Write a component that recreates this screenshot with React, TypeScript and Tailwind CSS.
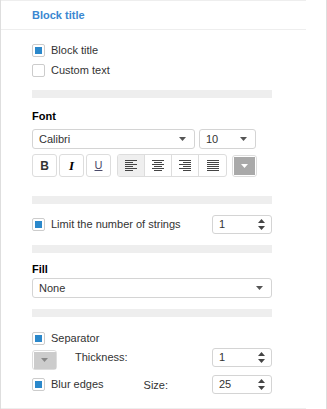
import React from 'react';

const font = { fontFamily: '"Liberation Sans", Arial, sans-serif' };

function Checkbox({ checked, label }: { checked: boolean; label: string }) {
    return (
        <div className="flex items-center h-[20px]">
            <div className="w-[13px] h-[13px] border border-[#cccccc] rounded-[2px] bg-white flex items-center justify-center">
                {checked && <div className="w-[7px] h-[7px] bg-[#2b88cb]" />}
            </div>
            <span className="ml-[6px] text-[11px] text-[#333333]">{label}</span>
        </div>
    );
}

function Caret({ color = '#555555' }: { color?: string }) {
    return (
        <svg width="7" height="4" viewBox="0 0 7 4">
            <path d="M0 0h7L3.5 4z" fill={color} />
        </svg>
    );
}

function Select({ value, className }: { value: string; className: string }) {
    return (
        <div className={`h-[20px] border border-[#d4d4d4] rounded-[3px] bg-white flex items-center justify-between pl-[6px] pr-[8px] ${className}`}>
            <span className="text-[11px] text-[#333333]">{value}</span>
            <Caret />
        </div>
    );
}

function NumberInput({ value }: { value: string }) {
    return (
        <div className="w-[60px] h-[19px] border border-[#d4d4d4] rounded-[3px] bg-white flex items-center justify-between pl-[6px] pr-[6px]">
            <span className="text-[11px] text-[#333333]">{value}</span>
            <svg width="7" height="11" viewBox="0 0 7 11">
                <path d="M0 4h7L3.5 0z" fill="#444444" />
                <path d="M0 7h7L3.5 11z" fill="#444444" />
            </svg>
        </div>
    );
}

function Bar() {
    return <div className="h-[8px] bg-[#eeeeee]" />;
}

function AlignIcon({ kind }: { kind: 'left' | 'center' | 'right' | 'justify' }) {
    const rows = [0, 1, 2, 3, 4, 5];
    return (
        <svg width="12" height="12" viewBox="0 0 12 12">
            {rows.map((i) => {
                const short = kind !== 'justify' && i % 2 === 1;
                const w = short ? 8 : 12;
                let x = 0;
                if (kind === 'center') x = (12 - w) / 2;
                if (kind === 'right') x = 12 - w;
                return <rect key={i} x={x} y={i * 2} width={w} height={1} fill="#444444" />;
            })}
        </svg>
    );
}

export default function App() {
    return (
        <div className="w-[327px] h-[409px] bg-white border-l border-r border-[#dedede] overflow-hidden" style={font}>
            <div className="w-[305px] h-[409px] border-t border-b border-[#eeeeee]">
                <div className="h-[29px] border-b border-[#eeeeee] flex items-center pl-[31px]">
                    <span className="text-[11px] font-bold text-[#3a87d1]">Block title</span>
                </div>
                <div className="pl-[31px] w-[271px]">
                    <div className="mt-[10px]">
                        <Checkbox checked label="Block title" />
                        <Checkbox checked={false} label="Custom text" />
                    </div>
                    <div className="mt-[10px]"><Bar /></div>

                    <div className="mt-[12px] text-[11px] font-bold text-black leading-[13px]">Font</div>
                    <div className="mt-[6px] flex gap-[4px]">
                        <Select value="Calibri" className="w-[163px]" />
                        <Select value="10" className="w-[57px]" />
                    </div>
                    <div className="mt-[5px] flex items-center">
                        <div className="flex gap-[2px]">
                            <div className="w-[25px] h-[23px] border border-[#dddddd] rounded-[3px] flex items-center justify-center text-[12px] font-bold text-[#333333]">B</div>
                            <div className="w-[25px] h-[23px] border border-[#dddddd] rounded-[3px] flex items-center justify-center text-[13px] font-bold italic text-black" style={{ fontFamily: '"Liberation Serif", serif' }}>I</div>
                            <div className="w-[25px] h-[23px] border border-[#dddddd] rounded-[3px] flex items-center justify-center text-[11px] underline text-[#4a4a6a]">U</div>
                        </div>
                        <div className="ml-[6px] flex border border-[#dddddd] rounded-[3px] h-[23px] overflow-hidden">
                            <div className="w-[27px] bg-[#efefef] border-r border-[#dddddd] flex items-center justify-center"><AlignIcon kind="left" /></div>
                            <div className="w-[27px] border-r border-[#dddddd] flex items-center justify-center"><AlignIcon kind="center" /></div>
                            <div className="w-[27px] border-r border-[#dddddd] flex items-center justify-center"><AlignIcon kind="right" /></div>
                            <div className="w-[27px] flex items-center justify-center"><AlignIcon kind="justify" /></div>
                        </div>
                        <div className="ml-[5px] w-[25px] h-[22px] border border-[#dddddd] rounded-[3px] flex items-center justify-center">
                            <div className="w-[21px] h-[18px] bg-[#a9a9a9] flex items-center justify-center">
                                <Caret color="#ffffff" />
                            </div>
                        </div>
                    </div>
                    <div className="mt-[19px]"><Bar /></div>

                    <div className="mt-[10px] flex items-center justify-between">
                        <Checkbox checked label="Limit the number of strings" />
                        <NumberInput value="1" />
                    </div>
                    <div className="mt-[11px]"><Bar /></div>

                    <div className="mt-[10px] text-[11px] font-bold text-black leading-[13px]">Fill</div>
                    <div className="mt-[2px]">
                        <Select value="None" className="w-full" />
                    </div>
                    <div className="mt-[11px]"><Bar /></div>

                    <div className="mt-[11px]">
                        <Checkbox checked label="Separator" />
                    </div>
                    <div className="flex items-start">
                        <div className="mt-[2px] w-[25px] h-[20px] border border-[#dddddd] rounded-[3px] flex items-center justify-center">
                            <div className="w-[22px] h-[17px] bg-[#cccccc] flex items-center justify-center">
                                <Caret color="#888888" />
                            </div>
                        </div>
                        <span className="ml-[18px] mt-[3px] text-[11px] leading-[13px] text-[#333333]">Thickness:</span>
                        <div className="ml-auto"><NumberInput value="1" /></div>
                    </div>
                    <div className="mt-[4px] flex items-center">
                        <Checkbox checked label="Blur edges" />
                        <span className="ml-[40px] mt-[3px] text-[11px] text-[#333333]">Size:</span>
                        <div className="ml-auto"><NumberInput value="25" /></div>
                    </div>
                </div>
            </div>
        </div>
    );
}
